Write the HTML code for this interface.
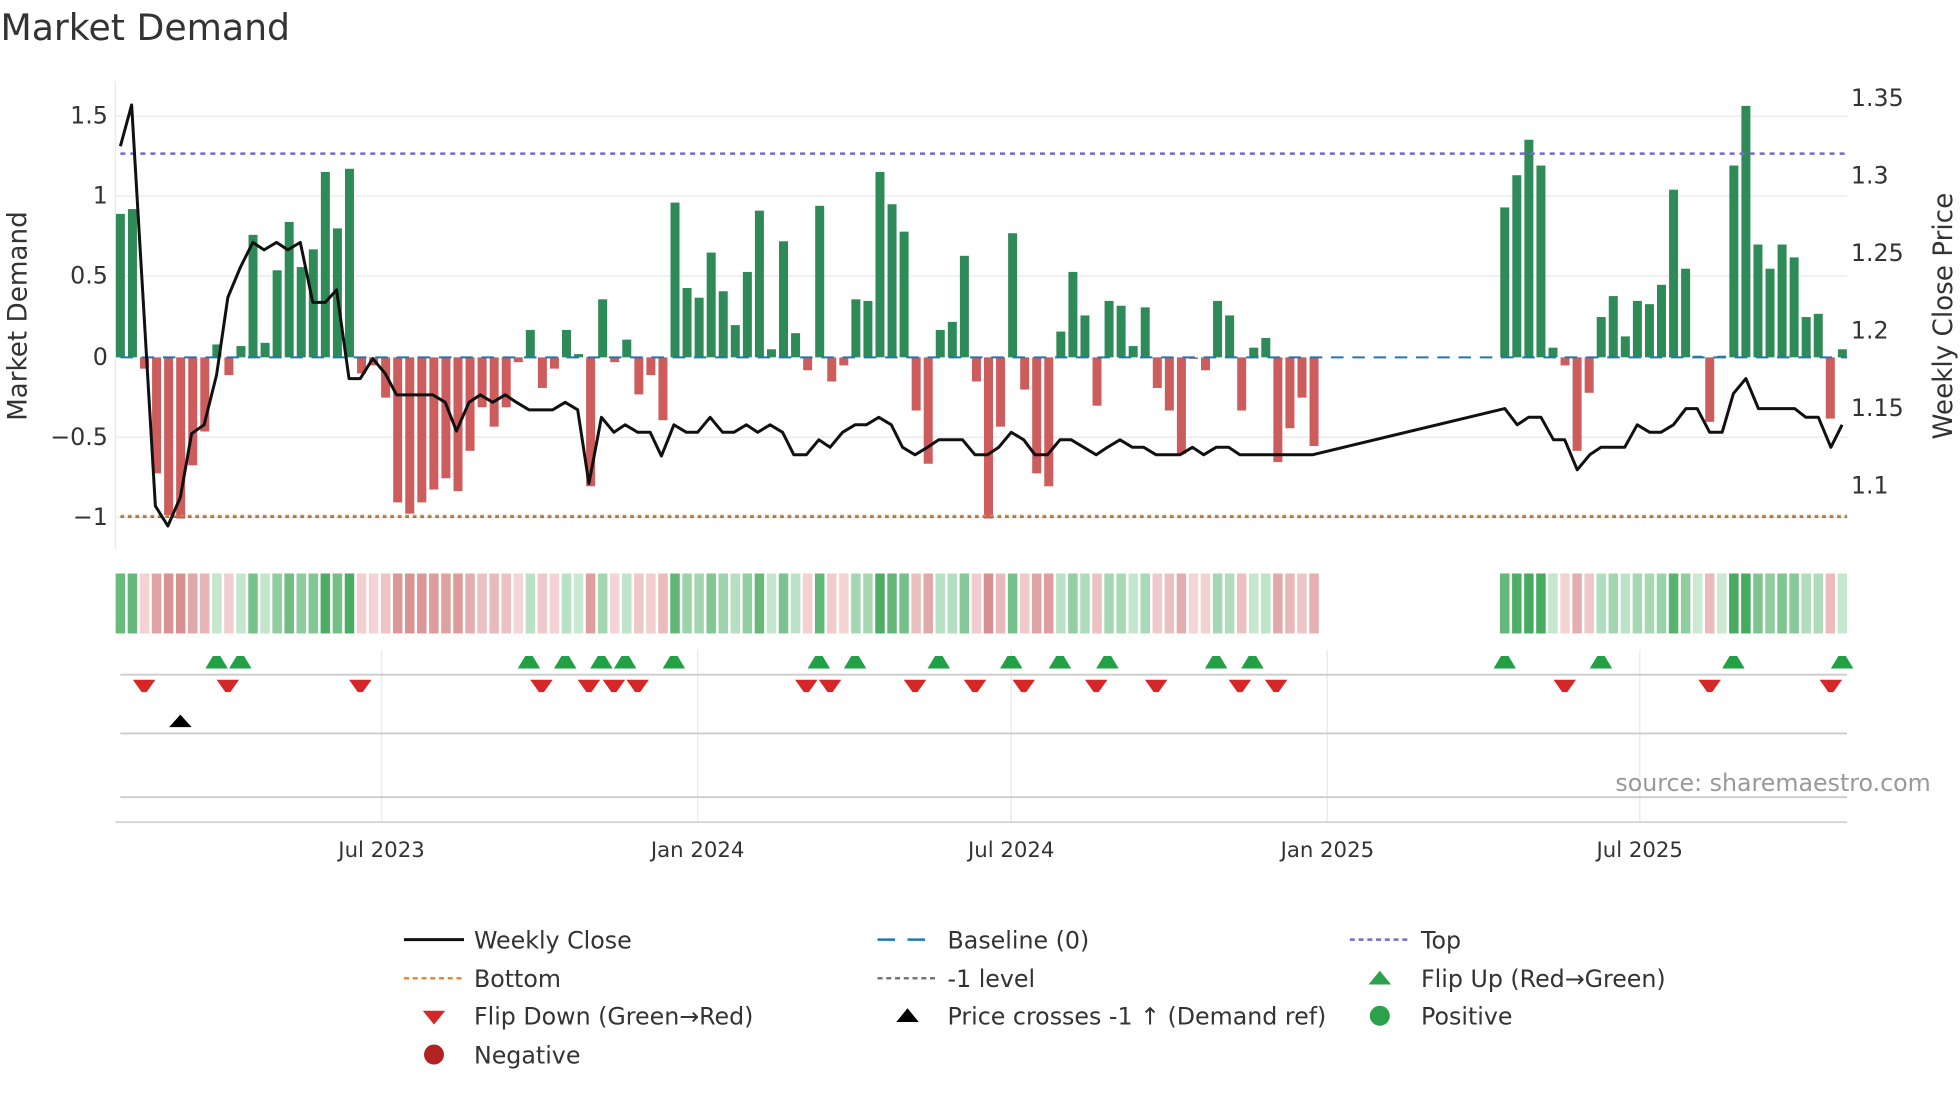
<!DOCTYPE html>
<html><head><meta charset="utf-8"><style>
html,body{margin:0;padding:0;background:#fff;}
svg{display:block;font-family:"DejaVu Sans","Liberation Sans",sans-serif;}
</style></head><body>
<svg id="s" width="1960" height="1102" viewBox="0 0 1568 882" xmlns="http://www.w3.org/2000/svg">
<rect width="1568" height="882" fill="#fff"/>
<text x="0" y="32" font-size="29" fill="#333">Market Demand</text>
<g stroke="#ececf0" stroke-width="1.2">
<line x1="92" x2="1478" y1="93" y2="93"/><line x1="92" x2="1478" y1="157" y2="157"/>
<line x1="92" x2="1478" y1="221" y2="221"/><line x1="92" x2="1478" y1="350" y2="350"/>
<line x1="92" x2="1478" y1="414" y2="414"/>
<line x1="92" x2="92" y1="65" y2="440"/>
<line x1="305" x2="305" y1="520" y2="658"/><line x1="558" x2="558" y1="520" y2="658"/>
<line x1="809" x2="809" y1="520" y2="658"/><line x1="1062" x2="1062" y1="520" y2="658"/>
<line x1="1312" x2="1312" y1="520" y2="658"/>
</g>
<g font-size="19" fill="#333" text-anchor="end">
<text x="86" y="99">1.5</text><text x="86" y="163">1</text><text x="86" y="227">0.5</text>
<text x="86" y="292">0</text><text x="86" y="356">−0.5</text><text x="86" y="420">−1</text>
</g>
<g font-size="19" fill="#333">
<text x="1481" y="85">1.35</text><text x="1481" y="147">1.3</text><text x="1481" y="209">1.25</text>
<text x="1481" y="271">1.2</text><text x="1481" y="333">1.15</text><text x="1481" y="395">1.1</text>
</g>
<text transform="translate(21,253) rotate(-90)" text-anchor="middle" font-size="21" fill="#333">Market Demand</text>
<text transform="translate(1562,253) rotate(-90)" text-anchor="middle" font-size="21" fill="#333">Weekly Close Price</text>
<g id="bars"></g>
<line x1="96" x2="1478" y1="286" y2="286" stroke="#1f77b4" stroke-width="1.6" stroke-dasharray="10,7"/>
<line x1="96" x2="1478" y1="123" y2="123" stroke="#7b68c8" stroke-width="2" stroke-dasharray="4,4"/>
<line x1="96" x2="1478" y1="413" y2="413" stroke="#e8892b" stroke-width="2" stroke-dasharray="3,3"/>
<line x1="96" x2="1478" y1="414" y2="414" stroke="#777" stroke-width="1.2" stroke-dasharray="3,3"/>
<polyline id="pl" fill="none" stroke="#111" stroke-width="2.4" stroke-linejoin="round"/>
<g id="heat"></g>
<line x1="96" x2="1478" y1="540" y2="540" stroke="#ccc" stroke-width="1.5"/>
<line x1="96" x2="1478" y1="587" y2="587" stroke="#ccc" stroke-width="1.5"/>
<line x1="96" x2="1478" y1="638" y2="638" stroke="#ccc" stroke-width="1.5"/>
<line x1="92" x2="1478" y1="658" y2="658" stroke="#ccc" stroke-width="1.2"/>
<g id="mk"></g>
<polygon points="135,582 153,582 144,572" fill="#000"/>
<text x="1545" y="633" text-anchor="end" font-size="19" fill="#999">source: sharemaestro.com</text>
<g font-size="17" fill="#333" text-anchor="middle">
<text x="305" y="686">Jul 2023</text><text x="558" y="686">Jan 2024</text><text x="809" y="686">Jul 2024</text>
<text x="1062" y="686">Jan 2025</text><text x="1312" y="686">Jul 2025</text>
</g>
<g font-size="19" fill="#333">
<line x1="323" x2="371" y1="752" y2="752" stroke="#111" stroke-width="2.4"/><text x="379" y="759">Weekly Close</text>
<line x1="323" x2="371" y1="783" y2="783" stroke="#e8892b" stroke-width="2" stroke-dasharray="4,3"/><text x="379" y="790">Bottom</text>
<polygon points="338,809 356,809 347,820" fill="#d62728"/><text x="379" y="820">Flip Down (Green→Red)</text>
<circle cx="347" cy="844" r="8" fill="#b22222"/><text x="379" y="851">Negative</text>
<line x1="702" x2="750" y1="752" y2="752" stroke="#1f77b4" stroke-width="2" stroke-dasharray="14,10"/><text x="758" y="759">Baseline (0)</text>
<line x1="702" x2="750" y1="783" y2="783" stroke="#777" stroke-width="2" stroke-dasharray="4,3"/><text x="758" y="790">-1 level</text>
<polygon points="717,818 735,818 726,807" fill="#000"/><text x="758" y="820">Price crosses -1 ↑ (Demand ref)</text>
<line x1="1080" x2="1128" y1="752" y2="752" stroke="#7b68c8" stroke-width="2" stroke-dasharray="4,3"/><text x="1137" y="759">Top</text>
<polygon points="1095,788 1113,788 1104,777" fill="#2ca14a"/><text x="1137" y="790">Flip Up (Red→Green)</text>
<circle cx="1104" cy="813" r="8" fill="#2ca14a"/><text x="1137" y="820">Positive</text>
</g>
</svg>
<script>
var NS="http://www.w3.org/2000/svg";
var v1=[0.89,0.92,-0.07,-0.72,-0.98,-1.0,-0.67,-0.46,0.08,-0.11,0.07,0.76,0.09,0.54,0.84,0.56,0.67,1.15,0.80,1.17,-0.1,-0.05,-0.25,-0.9,-0.97,-0.9,-0.82,-0.75,-0.83,-0.58,-0.31,-0.43,-0.31,-0.03,0.17,-0.19,-0.07,0.17,0.02,-0.8,0.36,-0.03,0.11,-0.23,-0.11,-0.39,0.96,0.43,0.37,0.65,0.41,0.20,0.53,0.91,0.05,0.72,0.15,-0.08,0.94,-0.15,-0.05,0.36,0.35,1.15,0.95,0.78,-0.33,-0.66,0.17,0.22,0.63,-0.15,-1.0,-0.43,0.77,-0.2,-0.72,-0.8,0.16,0.53,0.26,-0.3,0.35,0.32,0.07,0.31,-0.19,-0.33,-0.6,-0.01,-0.08,0.35,0.26,-0.33,0.06,0.12,-0.65,-0.44,-0.25,-0.55];
var v2=[0.93,1.13,1.35,1.19,0.06,-0.05,-0.58,-0.22,0.25,0.38,0.13,0.35,0.33,0.45,1.04,0.55,0.01,-0.4,0.01,1.19,1.56,0.7,0.55,0.7,0.62,0.25,0.27,-0.38,0.05];
var step=9.65,bars=[];
v1.forEach(function(v,i){bars.push([96+i*step,v]);});
v2.forEach(function(v,i){bars.push([1204+i*step,v]);});
var gb=document.getElementById("bars"),gh=document.getElementById("heat");
function mix(a,b,t){return "rgb("+[0,1,2].map(function(k){return Math.round(a[k]+(b[k]-a[k])*t)}).join(",")+")";}
bars.forEach(function(b){
 var x=b[0],v=b[1],h=Math.abs(v)*129;
 var r=document.createElementNS(NS,"rect");
 r.setAttribute("x",x-3.6);r.setAttribute("width",7.2);
 r.setAttribute("y",v>=0?286-h:286);r.setAttribute("height",Math.max(h,0.8));
 r.setAttribute("fill",v>=0?"#2e8b57":"#cd5c5c");gb.appendChild(r);
 var c=document.createElementNS(NS,"rect");
 c.setAttribute("x",x-3.8);c.setAttribute("width",7.6);c.setAttribute("y",459);c.setAttribute("height",48);
 var t=Math.min(Math.abs(v)/1.2,1);
 c.setAttribute("fill",v>=0?mix([204,234,212],[70,170,95],t):mix([245,215,215],[210,130,130],t));
 gh.appendChild(c);
});
var pts=[[96,117],[105,84],[124,405],[134,421],[144,398],[153,347],[163,340],[173,300],[182,238],[192,214],[202,194],[211,200],[221,194],[230,200],[240,194],[250,242],[260,242],[269,232],[279,303],[288,303],[298,287],[308,299],[317,316],[327,316],[337,316],[346,316],[356,322],[365,345],[375,322],[384,316],[394,322],[404,316],[413,322],[423,328],[433,328],[442,328],[452,322],[462,328],[471,387],[481,334],[491,346],[500,340],[510,346],[520,346],[529,365],[539,340],[549,346],[558,346],[568,334],[578,346],[587,346],[597,340],[606,346],[616,340],[626,346],[635,364],[645,364],[655,352],[664,358],[674,346],[684,340],[693,340],[703,334],[713,340],[722,358],[732,364],[742,358],[751,352],[761,352],[770,352],[780,364],[790,364],[799,358],[809,346],[819,352],[828,364],[838,364],[848,352],[857,352],[867,358],[877,364],[886,358],[896,352],[906,358],[915,358],[925,364],[935,364],[944,364],[954,358],[963,364],[973,358],[983,358],[992,364],[1002,364],[1012,364],[1021,364],[1031,364],[1040,364],[1050,364],[1204,327],[1214,340],[1223,334],[1233,334],[1243,352],[1252,352],[1262,376],[1272,364],[1281,358],[1291,358],[1300,358],[1310,340],[1320,346],[1329,346],[1339,340],[1349,327],[1358,327],[1368,346],[1378,346],[1387,315],[1397,303],[1407,327],[1416,327],[1426,327],[1436,327],[1445,334],[1455,334],[1465,358],[1474,340]];
document.getElementById("pl").setAttribute("points",pts.map(function(p){return p.join(",")}).join(" "));
var up=[173,192,423,452,481,500,539,655,684,751,809,848,886,973,1002,1204,1281,1387,1474];
var dn=[115,182,288,433,471,491,510,645,664,732,780,819,877,925,992,1021,1252,1368,1465];
var gm=document.getElementById("mk");
up.forEach(function(x){var p=document.createElementNS(NS,"polygon");p.setAttribute("points",(x-9)+",535 "+(x+9)+",535 "+(x+3)+",525 "+(x-3)+",525");p.setAttribute("fill","#22a045");gm.appendChild(p);});
dn.forEach(function(x){var p=document.createElementNS(NS,"polygon");p.setAttribute("points",(x-9)+",544 "+(x+9)+",544 "+(x+2)+",554 "+(x-2)+",554");p.setAttribute("fill","#d62728");gm.appendChild(p);});
</script>
</body></html>
